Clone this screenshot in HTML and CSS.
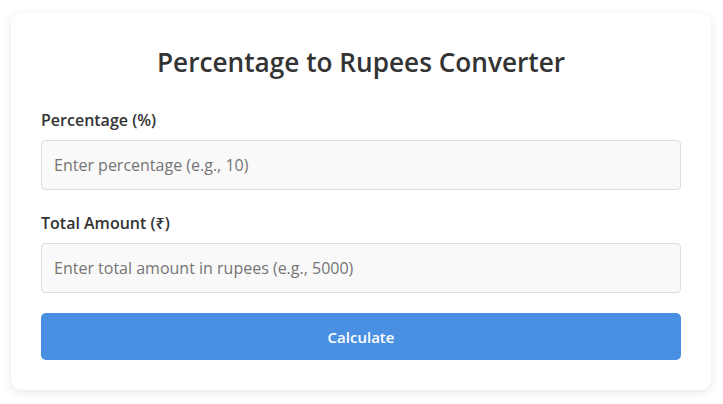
FILE: index.html
```html
<!DOCTYPE html>
<html lang="en">
<head>
    <meta charset="UTF-8">
    <meta name="viewport" content="width=device-width, initial-scale=1.0">
    <title>Percentage to Rupees Converter</title>
    <link rel="stylesheet" href="styles.css">
</head>
<body>
    <div class="container">
        <h2>Percentage to Rupees Converter</h2>
        <div class="form-group">
            <label for="percentage">Percentage (%)</label>
            <input type="number" id="percentage" placeholder="Enter percentage (e.g., 10)">
        </div>
        <div class="form-group">
            <label for="amount">Total Amount (₹)</label>
            <input type="number" id="amount" placeholder="Enter total amount in rupees (e.g., 5000)">
        </div>
        <button class="calc-btn">Calculate</button>
    </div>
</body>
</html>
```

FILE: styles.css
```css
body {
    font-family: 'Open Sans', 'Noto Sans', sans-serif;
    background: #fff;
    color: #333;
    margin: 0;
    padding: 13px 12px 13px 11px;
}
.container {
    max-width: 640px;
    margin: 0 auto;
    padding: 30px;
    background: white;
    border-radius: 10px;
    box-shadow: 0 2px 10px rgba(0, 0, 0, 0.1);
}
h2 {
    text-align: center;
    font-size: 26.2px;
    font-weight: 600;
    line-height: 38px;
    margin: 0 0 27px;
    color: #333;
}
.form-group {
    margin-bottom: 20px;
}
.form-group:first-of-type {
    margin-bottom: 21px;
}
label {
    display: block;
    font-size: 16px;
    font-weight: 600;
    line-height: 24px;
    margin-bottom: 8px;
    color: #333;
}
input {
    display: block;
    box-sizing: border-box;
    width: 100%;
    height: 50px;
    padding: 0 12px;
    font-family: inherit;
    font-size: 16px;
    background: #f9f9f9;
    border: 1px solid #ddd;
    border-radius: 4px;
    color: #333;
}
input::placeholder {
    color: #757575;
}
.calc-btn {
    display: block;
    width: 100%;
    height: 47px;
    border: none;
    border-radius: 5px;
    background: #4a90e2;
    color: white;
    font-family: inherit;
    font-size: 15px;
    font-weight: 600;
    cursor: pointer;
}
```
